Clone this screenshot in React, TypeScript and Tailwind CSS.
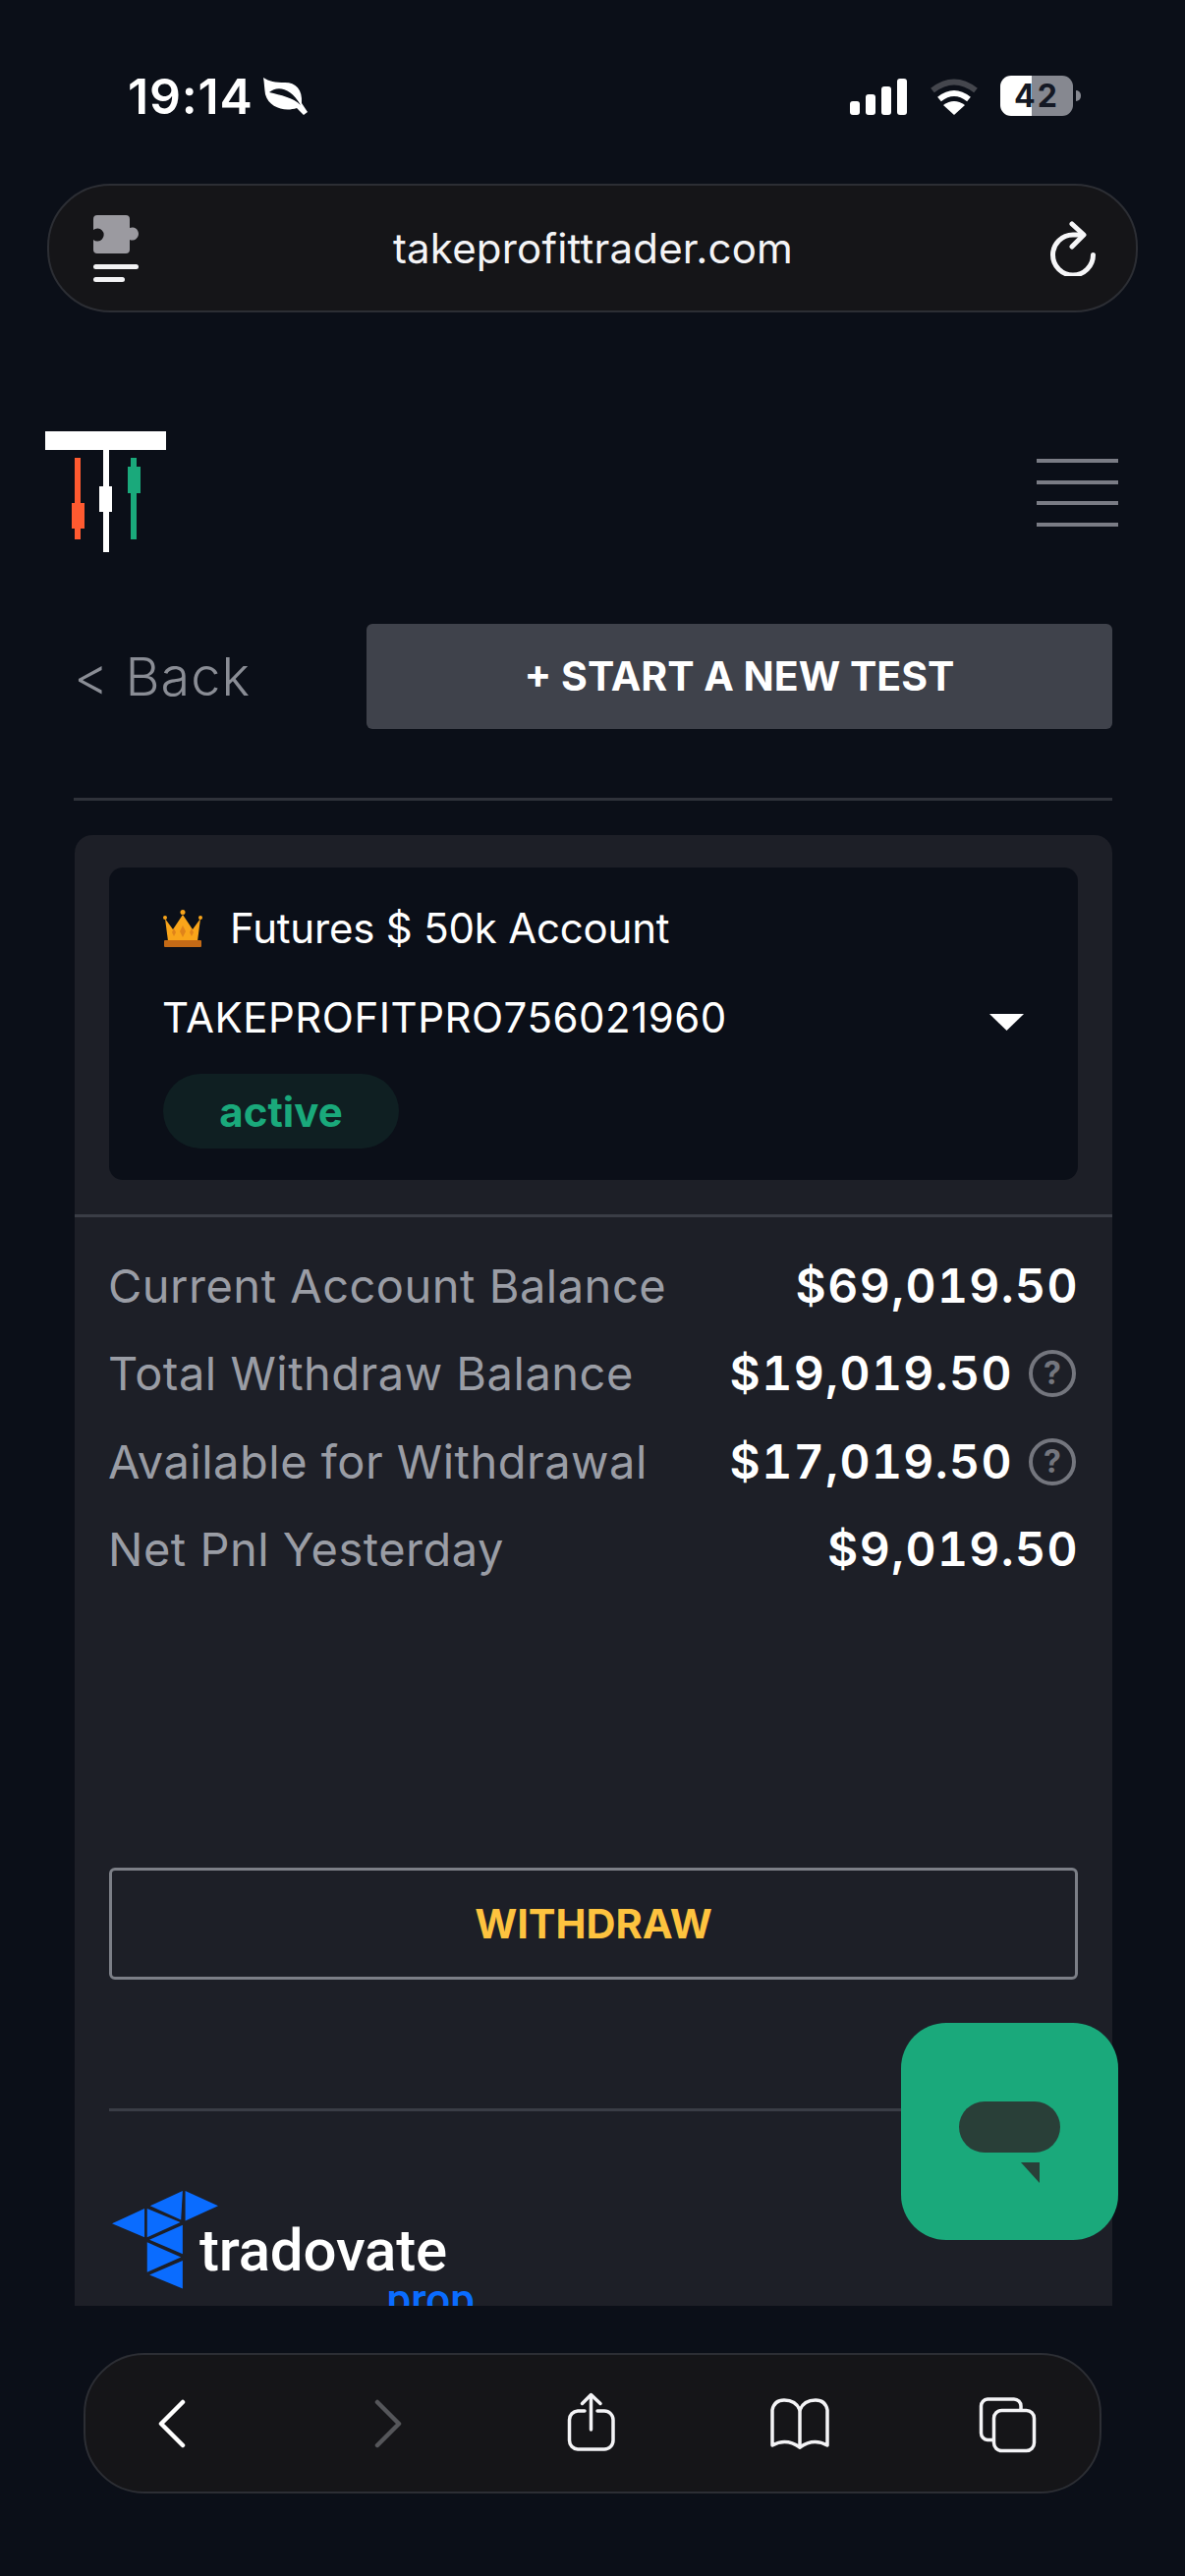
const font = { fontFamily: 'Inter, "Liberation Sans", sans-serif' }

// Account summary rows
const rows = [
  { label: 'Current Account Balance', value: '$69,019.50', help: false },
  { label: 'Total Withdraw Balance', value: '$19,019.50', help: true },
  { label: 'Available for Withdrawal', value: '$17,019.50', help: true },
  { label: 'Net Pnl Yesterday', value: '$9,019.50', help: false },
]

function Leaf() {
  return (
    <svg width="45" height="39" viewBox="0 0 45 39">
      <path d="M0 0C6 4 12 5 22 5C33 5 40 12 39 26L45 35L41 38L34 31C22 35 6 31 2 17C1 11 1 5 0 0Z" fill="#fff" />
      <path d="M6 15C14 8 28 10 38 28C30 20 18 18 6 15Z" fill="#0b0f18" />
    </svg>
  )
}

function StatusBar() {
  return (
    <div className="flex h-[187px] items-start justify-between pl-[130px] pr-[106px] pt-[77px]">
      <div className="flex items-center gap-[10px] pt-px">
        <span className="text-[50px] leading-[41px] font-semibold tracking-[0.8px] text-white">19:14</span>
        <Leaf />
      </div>
      <div className="flex items-center">
        <svg width="58" height="37" viewBox="0 0 58 37" className="mt-[2px]">
          <rect x="0" y="23" width="10" height="14" rx="3" fill="#fff" />
          <rect x="16" y="16" width="10" height="21" rx="3" fill="#fff" />
          <rect x="32" y="8" width="10" height="29" rx="3" fill="#fff" />
          <rect x="48" y="0" width="10" height="37" rx="3" fill="#fff" />
        </svg>
        <svg width="50" height="37" viewBox="0 0 50 37" className="ml-[23px] mt-[2px]">
          <path d="M3 12Q25 -5 47 12" stroke="#44464d" strokeWidth="6" fill="none" />
          <path d="M10 21Q25 9 40 21" stroke="#fff" strokeWidth="6" fill="none" />
          <path d="M25 37L14 27Q25 19 36 27Z" fill="#fff" />
        </svg>
        <div className="ml-[22px] flex h-[41px] w-[74px] items-center justify-center rounded-[11px] bg-[linear-gradient(to_right,#ffffff_43%,#868890_43%)] text-[32px] font-bold tracking-[2px] text-[#141824]">
          42
        </div>
        <div className="ml-[3px] h-[11px] w-[5px] rounded-r-full bg-[#868890]" />
      </div>
    </div>
  )
}

function UrlBar() {
  return (
    <div className="mx-[48px] flex h-[131px] items-center justify-between rounded-[64px] border-2 border-[#2c2e34] bg-[#151518] pl-[45px] pr-[37px]">
      <div className="flex w-[48px] flex-col">
        <svg width="48" height="40" viewBox="0 0 48 40">
          <path
            d="M4 0H33A4 4 0 0 1 37 4V13A6.500 6.500 0 1 1 37 25V35A4 4 0 0 1 33 39H4A4 4 0 0 1 0 35V25A6.500 6.500 0 1 0 0 15V4A4 4 0 0 1 4 0Z"
            fill="#9b9aa0"
          />
        </svg>
        <div className="mt-[10px] h-[5px] w-[46px] rounded-full bg-[#f2f2f4]" />
        <div className="mt-[8px] h-[5px] w-[32px] rounded-full bg-[#f2f2f4]" />
      </div>
      <span className="mr-[5px] text-[42px] leading-none tracking-[0.2px] text-[#f4f4f6]">takeprofittrader.com</span>
      <svg width="50" height="56" viewBox="19 11 50 56" fill="none" stroke="#f6f6f8" strokeWidth="5" strokeLinecap="round" strokeLinejoin="round">
        <path d="M51 25H42A20.500 20.500 0 1 0 62.500 45.500" />
        <path d="M41 14L53 25L41 37" />
      </svg>
    </div>
  )
}

function Logo() {
  return (
    <svg width="123" height="123" viewBox="0 0 123 123">
      <rect x="0" y="0" width="123" height="19" fill="#fff" />
      <rect x="59" y="19" width="6" height="104" fill="#fff" />
      <rect x="55" y="56" width="13" height="26" fill="#fff" />
      <rect x="30" y="27" width="6" height="83" fill="#ff5a30" />
      <rect x="27" y="73" width="13" height="26" fill="#ff5a30" />
      <rect x="87" y="27" width="6" height="83" fill="#1aa97b" />
      <rect x="84" y="36" width="13" height="27" fill="#1aa97b" />
    </svg>
  )
}

function Crown() {
  return (
    <svg width="40" height="38" viewBox="0 0 40 38" className="ml-[1px]">
      <path d="M2 9L10 20L20 5L30 20L38 9L35 32H5Z" fill="#f9a51a" />
      <circle cx="2" cy="8" r="2" fill="#f9a51a" />
      <circle cx="38" cy="8" r="2" fill="#f9a51a" />
      <circle cx="20" cy="2.500" r="2.500" fill="#f9a51a" />
      <path d="M20 16L23 22L20 28L17 22Z" fill="#e0831a" />
      <path d="M11 19L13 23L11 27L9 23Z" fill="#e0831a" />
      <path d="M29 19L31 23L29 27L27 23Z" fill="#e0831a" />
      <rect x="1" y="31" width="38" height="7" rx="1" fill="#c46a16" />
    </svg>
  )
}

function HelpIcon() {
  return (
    <div className="mr-[3px] flex h-[48px] w-[48px] items-center justify-center rounded-full border-[4px] border-[#74767e] text-[32px] font-bold text-[#74767e]">
      ?
    </div>
  )
}

function TradovateLogo() {
  return (
    <div className="flex items-start">
      <svg width="108" height="100" viewBox="42 65 320 296" className="shrink-0">
        <g fill="#0a6cff">
          <path d="M255 65L157 110L250 152Z" />
          <path d="M263 65L362 110L263 155Z" />
          <path d="M140 118L42 163L140 205Z" />
          <path d="M148 118L248 160L148 205Z" />
          <path d="M255 168L155 212L255 255Z" />
          <path d="M148 220L250 265L148 310Z" />
          <path d="M255 275L155 318L255 360Z" />
        </g>
      </svg>
      <div className="-ml-[19px] mt-[28px] flex flex-col items-end" style={{ fontFamily: 'Roboto, sans-serif' }}>
        <span className="text-[60px] leading-[66px] font-medium tracking-[-0.2px] text-white">tradovate</span>
        <span className="-mr-[28px] -mt-[3px] text-[44px] leading-[40px] font-medium text-[#0a6cff]">prop</span>
      </div>
    </div>
  )
}

function AccountCard() {
  return (
    <div className="mx-[76px] mt-[35px] h-[1497px] w-[1056px] overflow-hidden rounded-t-[18px] bg-[#1d1f27]">
      <div className="px-[35px] pt-[33px]">
        <div className="h-[318px] rounded-[14px] bg-[#0b0f18] pl-[54px] pr-[55px] pt-[40px]">
          <div className="flex items-center gap-[28px]">
            <Crown />
            <span className="text-[42px] leading-[44px] tracking-[-0.2px] text-white">Futures $ 50k Account</span>
          </div>
          <div className="mt-[47px] flex items-center justify-between">
            <span className="text-[42px] leading-[44px] tracking-[0.5px] text-white">TAKEPROFITPRO756021960</span>
            <svg width="35" height="17" viewBox="0 0 35 17" className="mt-[8px]">
              <path d="M0 0H35L17.500 17Z" fill="#fff" />
            </svg>
          </div>
          <div className="ml-[1px] mt-[35px] flex h-[76px] w-[240px] items-center justify-center rounded-[38px] bg-[#0f1f22] text-[42px] font-bold text-[#1aa97b]">
            active
          </div>
        </div>
      </div>
      <div className="mt-[35px] h-[3px] bg-[#3a3d46]" />
      <div className="flex flex-col pl-[34px] pr-[34px] pt-[25px]">
        {rows.map((row) => (
          <div key={row.label} className="flex h-[89.500px] items-center justify-between">
            <span className="text-[47px] tracking-[0.5px] text-[#9a9da5]">{row.label}</span>
            <div className="flex items-center gap-[16px]">
              <span className="text-[48px] font-semibold tabular-nums tracking-[1.4px] text-white">{row.value}</span>
              {row.help && <HelpIcon />}
            </div>
          </div>
        ))}
      </div>
      <div className="px-[35px] pt-[279px]">
        <div className="flex h-[114px] items-center justify-center rounded-[6px] border-[3px] border-[#7c7f87] text-[41.500px] font-bold text-[#fdc33f]">
          WITHDRAW
        </div>
        <div className="mt-[131px] h-[3px] bg-[#3a3d46]" />
        <div className="mt-[81px] pl-[3px]">
          <TradovateLogo />
        </div>
      </div>
    </div>
  )
}

function ChatButton() {
  return (
    <div className="absolute left-[917px] top-[2059px] flex h-[221px] w-[221px] flex-col items-center rounded-[46px] bg-[#1aa97b] pt-[80px]">
      <div className="h-[52px] w-[103px] rounded-[26px] bg-[#293f38]" />
      <svg width="19" height="21" viewBox="0 0 19 21" className="ml-[41px] mt-[10px]">
        <path d="M0 0H19V21Z" fill="#293f38" />
      </svg>
    </div>
  )
}

function Toolbar() {
  return (
    <div className="mx-[85px] mt-[48px] flex h-[143px] w-[1036px] items-center rounded-[62px] border-2 border-[#2c2e34] bg-[#151518]">
      <svg width="30" height="50" viewBox="0 0 30 50" fill="none" stroke="#fff" strokeWidth="4.500" strokeLinecap="round" strokeLinejoin="round" className="ml-[73px]">
        <path d="M26 3L4 25L26 47" />
      </svg>
      <svg width="30" height="50" viewBox="0 0 30 50" fill="none" stroke="#55565a" strokeWidth="4.500" strokeLinecap="round" strokeLinejoin="round" className="ml-[190px]">
        <path d="M4 3L26 25L4 47" />
      </svg>
      <svg width="52" height="61" viewBox="16 14 52 61" fill="none" stroke="#f4f4f6" strokeWidth="3.500" strokeLinecap="round" strokeLinejoin="round" className="ml-[166px] mb-[2px]">
        <path d="M35 33H28A9 9 0 0 0 19.500 42V63A9 9 0 0 0 28 72H55A9 9 0 0 0 64 63V42A9 9 0 0 0 55 33H48" />
        <path d="M41.500 18V52" />
        <path d="M32.500 25.500L41.500 16.500L51 25.500" />
      </svg>
      <svg width="62" height="53" viewBox="223 20 62 53" fill="none" stroke="#f4f4f6" strokeWidth="3.500" strokeLinecap="round" strokeLinejoin="round" className="ml-[155px] mt-[2px]">
        <path d="M254 32Q250 22 238 22Q228 22 226 32V68Q240 60 254 70Q268 60 282 68V32Q280 22 270 22Q258 22 254 32Z" />
        <path d="M254 32V70" />
      </svg>
      <svg width="59" height="58" viewBox="436 17 59 58" fill="none" stroke="#f4f4f6" strokeWidth="3.500" strokeLinejoin="round" className="ml-[151px] mt-[2px]">
        <path d="M450 61.500H445A7 7 0 0 1 438.500 54.500V27A7 7 0 0 1 445 20H472A7 7 0 0 1 479 27V31" />
        <rect x="451.500" y="31.500" width="41" height="41" rx="8" />
      </svg>
    </div>
  )
}

export default function App() {
  return (
    <div className="relative h-[2622px] w-[1206px] overflow-hidden bg-[#0b0f18]" style={font}>
      <StatusBar />
      <UrlBar />
      <div className="flex items-start justify-between pl-[46px] pr-[68px] pt-[121px]">
        <Logo />
        <div className="mt-[28px] flex w-[83px] flex-col gap-[17.500px]">
          <div className="h-[4px] bg-[#7a7c85]" />
          <div className="h-[4px] bg-[#7a7c85]" />
          <div className="h-[4px] bg-[#7a7c85]" />
          <div className="h-[4px] bg-[#7a7c85]" />
        </div>
      </div>
      <div className="mt-[73px] flex h-[107px] items-center pl-[75px] pr-[74px]">
        <span className="text-[54px] font-light tracking-[1px] text-[#8a8d95]">&lt; Back</span>
        <div className="ml-auto flex h-[107px] w-[759px] items-center justify-center rounded-[6px] bg-[#3f424b] text-[41px] font-bold text-white">
          + START A NEW TEST
        </div>
      </div>
      <div className="mx-[75px] mt-[70px] h-[3px] w-[1057px] bg-[#2f323a]" />
      <AccountCard />
      <Toolbar />
      <ChatButton />
    </div>
  )
}
